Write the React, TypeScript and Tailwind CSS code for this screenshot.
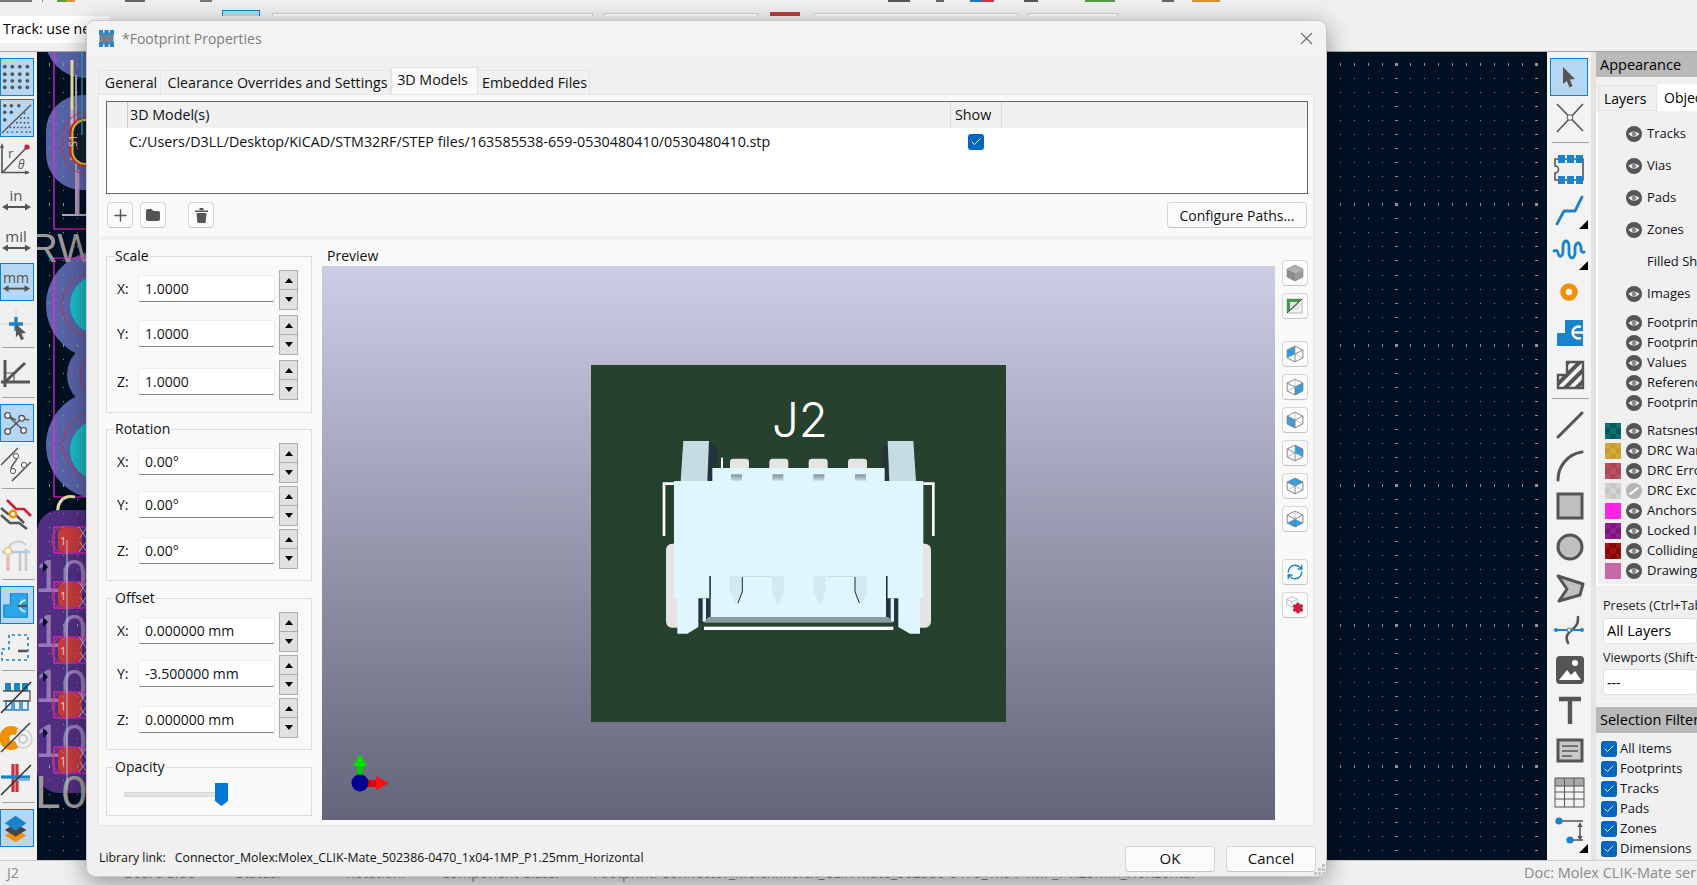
import React from 'react';
import { Check, Plus, RefreshCw, Settings } from 'lucide-react';

const INK = '#555555';
const BLUE = '#1c82c9';

// toolbar icons share one 34x38 box
const Ico: React.FC<{ children: React.ReactNode; w?: number }> = ({ children, w = 34 }) => (
  <svg width={w} height={38} viewBox={`0 0 ${w} 38`} fill="none">{children}</svg>
);

const Tool: React.FC<{ on?: boolean; wide?: boolean; children: React.ReactNode }> = ({ on, wide, children }) => (
  <div className={`h-[38px] shrink-0 ${wide ? 'w-[38px]' : 'w-[34px]'} ${on ? 'bg-[#b5d7f3] border border-[#0f7fd6]' : ''} flex items-center justify-center`}>
    {children}
  </div>
);

const Sep: React.FC = () => <div className="h-px mt-[2px] mb-[3px] mx-[2px] bg-[#a3a3a3] shrink-0" />;

const Corner = () => <polygon points="38,29 38,38 29,38" fill="#000" />;

const UnitIcon: React.FC<{ t: string; y: number; size?: number }> = ({ t, y, size = 15 }) => (
  <Ico>
    <text x="16" y={y} textAnchor="middle" fontSize={size} fill={INK} fontFamily="Open Sans, sans-serif">{t}</text>
    <path d="M5 26H28" stroke={INK} strokeWidth="2" />
    <path d="M2 26l6-3.5v7zM31 26l-6-3.5v7z" fill={INK} />
  </Ico>
);

const LeftToolbar = () => (
  <div className="w-[37px] shrink-0 flex flex-col gap-[3px] pt-[6px] bg-[#f0f0f0]">
    <Tool on>
      <Ico>
        {[4, 12, 20, 28].map(x => [8, 16, 23, 30].map(y => <circle key={`${x}${y}`} cx={x} cy={y} r="2" fill={INK} />))}
      </Ico>
    </Tool>
    <Tool on>
      <Ico>
        {[[4, 6], [11, 6], [19, 6], [4, 13], [11, 13], [4, 21]].map(([x, y]) => <circle key={`${x}${y}`} cx={x} cy={y} r="1.9" fill={INK} />)}
        {[[25, 14], [21, 19], [25, 19], [29, 19], [17, 24], [21, 24], [25, 24], [29, 24], [10, 29], [14, 29], [18, 29], [22, 29], [26, 29], [30, 29], [7, 34], [12, 34], [17, 34], [22, 34], [27, 34], [31, 34]].map(([x, y]) => <circle key={`${x}${y}`} cx={x} cy={y} r="1" fill={INK} />)}
        <path d="M1 35L32 5" stroke={INK} strokeWidth="1.4" />
      </Ico>
    </Tool>
    <Tool>
      <Ico>
        <path d="M2 33V5M1 32.5H29M3 32L27 7" stroke={INK} strokeWidth="1.6" />
        <path d="M2 3l-2 5h4zM30 32.5l-5-2v4z" fill={INK} />
        <circle cx="27" cy="7" r="2.6" fill="#c8203c" />
        <text x="8" y="18" fontSize="13" fill={INK} fontFamily="Open Sans, sans-serif">r</text>
        <text x="18" y="29" fontSize="12" fontStyle="italic" fill={INK} fontFamily="Open Sans, sans-serif">θ</text>
      </Ico>
    </Tool>
    <Tool><UnitIcon t="in" y={20} /></Tool>
    <Tool><UnitIcon t="mil" y={20} /></Tool>
    <Tool on><UnitIcon t="mm" y={20} /></Tool>
    <Tool>
      <Ico>
        <path d="M1 20H33M16 4V36" stroke="#d8d8d8" />
        <path d="M9 20H23M16 13V27" stroke={BLUE} strokeWidth="3.4" />
        <path d="M16 20L26 29 21.5 29.5 24 35 21 36 18.5 30.5 16 33Z" fill={INK} />
      </Ico>
    </Tool>
    <Sep />
    <Tool>
      <Ico>
        <path d="M5 6V33M1 28H30M5 28L25 9" stroke={INK} strokeWidth="3" />
        <path d="M5 19H14V28" stroke={INK} strokeWidth="1.2" />
      </Ico>
    </Tool>
    <Sep />
    <Tool on>
      <Ico>
        <path d="M7 11L24 27M7 28L22 14M22 14L30 16M7 11L16 16" stroke={INK} strokeWidth="1.5" />
        {[[7, 11], [22, 14], [7, 28], [24, 27]].map(([x, y]) => <circle key={x + y} cx={x} cy={y} r="3" fill="#fff" stroke={INK} strokeWidth="1.4" />)}
      </Ico>
    </Tool>
    <Tool>
      <Ico>
        <path d="M1 20L18 3M12 36L31 17" stroke={INK} strokeWidth="1.6" />
        <path d="M15 11C22 14 6 22 13 26" stroke={INK} strokeWidth="1.4" />
        <circle cx="16" cy="11" r="2.6" fill="#fff" stroke={INK} />
        <circle cx="13" cy="26" r="2.6" fill="#fff" stroke={INK} />
        <circle cx="24" cy="20" r="2.6" fill="#fff" stroke={INK} />
      </Ico>
    </Tool>
    <Sep />
    <Tool>
      <Ico>
        <path d="M7 5L16 14H24L31 21" stroke="#c8203c" strokeWidth="2.6" />
        <path d="M1 13L8 19H15L24 28" stroke={INK} strokeWidth="2.6" />
        <path d="M1 20L10 28H19L27 34" stroke={INK} strokeWidth="2.4" />
        <circle cx="13" cy="19" r="3.2" fill="#fff" stroke="#f29100" strokeWidth="2.4" />
      </Ico>
    </Tool>
    <Tool>
      <Ico>
        <path d="M8 20V35" stroke="#f0b8b8" strokeWidth="3.5" />
        <path d="M20 15V35M26 13V35" stroke="#c9c9c9" strokeWidth="2.6" />
        <path d="M8 14C10 4 22 4 26 9" stroke="#d0d0d0" strokeWidth="2.4" />
        <path d="M2 16H30" stroke="#a7cce8" strokeWidth="2.4" />
        <circle cx="8" cy="15" r="3.6" fill="#fff" stroke="#f3c48c" strokeWidth="2" />
      </Ico>
    </Tool>
    <Sep />
    <Tool on>
      <Ico>
        <path d="M3 19H10V7H28V32H3Z" fill="#2aa6ea" stroke={BLUE} strokeWidth="1.2" />
        <path d="M26 14A6 6 0 1 0 26 26" stroke="#d7effb" strokeWidth="2" />
        <path d="M18 20H28" stroke={INK} strokeWidth="2.6" />
      </Ico>
    </Tool>
    <Tool>
      <Ico>
        <path d="M2 22H9V8H28V33H2Z" stroke={BLUE} strokeWidth="1.6" strokeDasharray="3 3" />
        <path d="M18 24H27" stroke={INK} strokeWidth="2.6" />
      </Ico>
    </Tool>
    <Sep />
    <Tool>
      <Ico>
        <path d="M5 6h6v8H5zM14 6h6v8h-6zM22 6h6v8h-6z" fill={BLUE} />
        <path d="M6 24h6v9H6zM14 24h6v9h-6zM22 24h6v9h-6z" stroke={BLUE} strokeWidth="1.5" />
        <path d="M3 14H30V24H3" stroke={INK} strokeWidth="1.3" />
        <path d="M1 36L31 5" stroke="#333" strokeWidth="1.6" />
      </Ico>
    </Tool>
    <Tool>
      <Ico>
        <circle cx="23" cy="21" r="9" stroke="#cfcfcf" strokeWidth="1.5" />
        <circle cx="23" cy="21" r="4" stroke="#bcbcbc" strokeWidth="1.5" />
        <path d="M18 10A12 12 0 1 0 18 30L14 20Z" fill="#f29100" />
        <circle cx="13" cy="20" r="3.6" fill="#f0f0f0" />
        <path d="M1 34L30 5" stroke="#444" strokeWidth="1.6" />
      </Ico>
    </Tool>
    <Tool>
      <Ico>
        <path d="M13 5V33M17 5V33" stroke="#c8323c" strokeWidth="3.2" />
        <path d="M1 18H30" stroke={BLUE} strokeWidth="3.2" />
        <path d="M16 21H30" stroke="#7fb9e2" strokeWidth="2" />
        <path d="M1 36L31 6" stroke="#333" strokeWidth="1.6" />
      </Ico>
    </Tool>
    <Sep />
    <Tool on>
      <Ico>
        <path d="M4 27L15.5 20 27 27 15.5 34Z" fill="#f29100" />
        <path d="M4 21L15.5 14 27 21 15.5 28Z" fill="#444" />
        <path d="M4 14L15.5 6 27 14 15.5 22Z" fill={BLUE} />
      </Ico>
    </Tool>
  </div>
);

const RightToolbar = () => (
  <div className="w-[44px] shrink-0 flex flex-col gap-[3px] pt-[6px] pl-[3px] bg-[#f3f3f3]">
    <Tool on wide>
      <Ico w={36}><path d="M13 9L25 21 19.8 21.6 22.5 28 19.5 29.4 16.8 23 13 26Z" fill={INK} transform="translate(-1 0)" /></Ico>
    </Tool>
    <Tool wide>
      <Ico w={38}>
        <path d="M7 5L33 32M33 5L7 33" stroke={INK} strokeWidth="1.6" />
        <circle cx="20" cy="18.5" r="2.8" fill="#fff" stroke={INK} />
      </Ico>
    </Tool>
    <div className="h-px mt-[2px] mb-[4px] mx-[2px] bg-[#a3a3a3] shrink-0" />
    <Tool wide>
      <Ico w={38}>
        <path d="M5 9H33V30H5V23A3 3 0 0 0 5 16Z" fill="#f0f0f0" stroke={INK} strokeWidth="1.6" />
        <path d="M8 5h7v8H8zM17 5h7v8h-7zM26 5h7v8h-7zM8 26h7v8H8zM17 26h7v8h-7zM26 26h7v8h-7z" fill={BLUE} />
      </Ico>
    </Tool>
    <Tool wide>
      <Ico w={38}>
        <path d="M7 33L14 20H25L32 6" stroke={BLUE} strokeWidth="2.8" strokeLinecap="round" strokeLinejoin="round" />
        <Corner />
      </Ico>
    </Tool>
    <Tool wide>
      <Ico w={38}>
        <path d="M4 19Q7 17 8 21T11 24 13 20V13Q14 9 16 9T19 13V22Q20 26 22 26T25 22V15Q26 11 28 11T31 15V18Q32 21 34 20" stroke={BLUE} strokeWidth="2.8" strokeLinecap="round" />
        <Corner />
      </Ico>
    </Tool>
    <Tool wide>
      <Ico w={38}><circle cx="19" cy="19" r="6" stroke="#f29100" strokeWidth="5.5" /></Ico>
    </Tool>
    <Tool wide>
      <Ico w={38}>
        <path d="M7 19H15V6H33V32H7Z" fill={BLUE} />
        <path d="M31 13A6 6 0 1 0 31 24" stroke="#fff" strokeWidth="2.4" />
        <path d="M24 18.5H33" stroke="#f0f0f0" strokeWidth="2.6" />
      </Ico>
    </Tool>
    <Tool wide>
      <Ico w={38}>
        <defs>
          <pattern id="hatch" width="8" height="8" patternUnits="userSpaceOnUse" patternTransform="rotate(45)">
            <rect width="4" height="8" fill="#555" />
          </pattern>
        </defs>
        <path d="M8 20H17V7H33V33H8Z" fill="url(#hatch)" stroke={INK} strokeWidth="2.4" />
      </Ico>
    </Tool>
    <Sep />
    <Tool wide><Ico w={38}><path d="M8 32L32 8" stroke={INK} strokeWidth="3" strokeLinecap="round" /></Ico></Tool>
    <Tool wide><Ico w={38}><path d="M8 34C8 20 18 8 32 6" stroke={INK} strokeWidth="3" strokeLinecap="round" /></Ico></Tool>
    <Tool wide><Ico w={38}><rect x="8" y="7" width="24" height="24" fill="#c0c0c0" stroke={INK} strokeWidth="3" /></Ico></Tool>
    <Tool wide><Ico w={38}><circle cx="20" cy="19" r="12" fill="#c0c0c0" stroke={INK} strokeWidth="3" /></Ico></Tool>
    <Tool wide><Ico w={38}><path d="M8 7L33 15 30 26 9 32 17 20Z" fill="#c0c0c0" stroke={INK} strokeWidth="3" strokeLinejoin="round" /></Ico></Tool>
    <Tool wide>
      <Ico w={38}>
        <path d="M18 33C14 24 20 22 24 18S28 12 28 7" stroke={INK} strokeWidth="2.6" strokeLinecap="round" />
        <path d="M5 20H33" stroke={BLUE} strokeWidth="2" />
        <circle cx="6" cy="20" r="2" fill={BLUE} /><circle cx="32" cy="20" r="2" fill={BLUE} />
        <circle cx="19" cy="20" r="2" fill="#fff" stroke={BLUE} />
      </Ico>
    </Tool>
    <Tool wide>
      <Ico w={38}>
        <rect x="6" y="5" width="28" height="28" rx="4" fill={INK} />
        <path d="M9 29L17 19 21 24 25 20 31 29Z" fill="#fff" />
        <circle cx="25" cy="12" r="3" fill="#fff" />
      </Ico>
    </Tool>
    <Tool wide><Ico w={38}><path d="M9 7H31M20 7V32" stroke={INK} strokeWidth="4.4" /></Ico></Tool>
    <Tool wide>
      <Ico w={38}>
        <rect x="8" y="7" width="24" height="21" fill="#c8c8c8" stroke={INK} strokeWidth="3" />
        <path d="M12 13H28M12 18H28M12 23H22" stroke={INK} strokeWidth="1.5" />
      </Ico>
    </Tool>
    <Tool wide>
      <Ico w={38}>
        <rect x="5" y="4" width="29" height="8" fill="#a9a9a9" />
        <path d="M5 4H34V33H5ZM5 12H34M5 18H34M5 25H34M14.5 4V33M24 4V33" stroke={INK} strokeWidth="1" />
      </Ico>
    </Tool>
    <Tool wide>
      <Ico w={38}>
        <path d="M9 6H33M22 25H33M30 9V24" stroke={INK} strokeWidth="1.5" />
        <path d="M30 7l-2.5 5h5zM30 26l-2.5-5h5z" fill={INK} />
        <circle cx="9" cy="6" r="3.6" fill={BLUE} /><circle cx="20" cy="25" r="3.6" fill={BLUE} />
        <Corner />
      </Ico>
    </Tool>
  </div>
);

// canvas grid: every 10th column/row has longer ticks
const gridPath = () => {
  const out: string[] = [];
  const pitch = 14.035;
  for (let ix = -96; ix <= 11; ix++) {
    const x = Math.round(1396 + ix * pitch);
    if (x > 87 && x < 1335) continue;
    for (let iy = 0; iy < 57; iy++) {
      const y = Math.round(64 + iy * pitch);
      const mx = ((ix % 10) + 10) % 10 === 0;
      const my = iy % 10 === 0;
      if (mx && my) out.push(`M${x - 1} ${y - 1}h3v3h-3z`);
      else if (mx) out.push(`M${x - 1} ${y}h3v1h-3z`);
      else if (my) out.push(`M${x} ${y - 1}h1v3h-1z`);
      else out.push(`M${x} ${y}h1v1h-1z`);
    }
  }
  return out.join('');
};

const BoardArt = () => (
  <svg className="absolute inset-0" width={1510} height={809} viewBox="37 52 1510 809" fill="none">
    <circle cx="85" cy="38" r="40" fill="#5a63a8" />
    <rect x="46" y="95" width="90" height="95" rx="36" fill="#5a63a8" />
    <circle cx="100" cy="305" r="54" fill="#5a63a8" />
    <circle cx="100" cy="375" r="33" fill="#5a63a8" />
    <circle cx="100" cy="445" r="54" fill="#5a63a8" />
    <circle cx="95" cy="305" r="33" stroke="#b43a48" />
    <circle cx="100" cy="305" r="30" fill="#19bcc8" />
    <circle cx="100" cy="375" r="20" stroke="#b43a48" />
    <circle cx="95" cy="445" r="32" stroke="#b43a48" />
    <circle cx="100" cy="450" r="30" fill="#19bcc8" />
    <path d="M72 60V110" stroke="#efe59c" strokeWidth="3" />
    <path d="M72 110V160" stroke="#e8b6c8" strokeWidth="3" />
    <path d="M76 75V215" stroke="#a9a9a9" strokeWidth="2" />
    <path d="M62 215H87" stroke="#b0b0b0" strokeWidth="2" />
    <path d="M78 170V215" stroke="#b98cc8" strokeWidth="3" />
    <rect x="63" y="112" width="50" height="62" rx="24" stroke="#b43a48" />
    <rect x="69" y="117" width="40" height="50" rx="17" fill="#c62a2a" />
    <rect x="72.5" y="120" width="30" height="44" rx="13" fill="#15202e" stroke="#e3c13a" strokeWidth="2" />
    <path d="M82 52V135" stroke="#35b6d8" strokeWidth="1.2" />
    <text transform="rotate(-90 77 147)" x="77" y="147" fontSize="11" fill="#d8d8d8" fontFamily="Open Sans, sans-serif">S1</text>
    <text x="29" y="262" fontSize="40" fill="#9a9a9a" fontFamily="Liberation Sans, sans-serif">RW</text>
    <path d="M54 52V229H87M87 258H54V497H87" stroke="#ff22dd" strokeWidth="1.2" />
    <path d="M75 497C62 494 54 506 60 517 64 524 72 524 78 520" stroke="#e4dfa5" strokeWidth="3" />
    <rect x="37" y="510" width="80" height="283" rx="22" fill="#512f80" />
    {[592, 647, 702, 757].map(y => <text key={y} x="35" y={y} fontSize="46" letterSpacing="1" fill="#b89bd2" fillOpacity=".7" fontFamily="Liberation Sans, sans-serif">100</text>)}
    <text x="35" y="808" fontSize="46" letterSpacing="1" fill="#9a9a9a" fontFamily="Liberation Sans, sans-serif">L00</text>
    {[540, 595, 650, 705, 760].map(y => (
      <g key={y}>
        <rect x="58" y={y - 12} width="24" height="24" rx="5" fill="#c63a3a" />
        <text x="60" y={y + 5} fontSize="11" fill="#f0d8d8" fontFamily="Open Sans, sans-serif">1</text>
        <rect x="54" y={y - 13} width="40" height="26" stroke="#ff22dd" />
        <path d={`M79 ${y - 13}L87 ${y - 1}M87 ${y - 13}L79 ${y - 1}M79 ${y + 1}L87 ${y + 12}M87 ${y + 1}L79 ${y + 12}`} stroke="#c9a5d8" />
        <circle cx="66" cy={y} r="14" stroke="#c63a58" />
      </g>
    ))}
    {[567, 622, 677, 733].map(y => <path key={y} d={`M43 ${y - 5}l5 5-5 5z`} fill="#001023" />)}
    <path d="M67 540V790" stroke="#9fd0ea" />
    <path d={gridPath()} fill="#8d9198" shapeRendering="crispEdges" />
  </svg>
);

const Eye: React.FC<{ off?: boolean }> = ({ off }) => (
  <svg width={16} height={16} viewBox="0 0 16 16" className="shrink-0">
    <circle cx="8" cy="8" r="8" fill={off ? '#b4b4b4' : INK} />
    {off ? (
      <path d="M3.5 11.5L12.5 4.5" stroke="#fff" strokeWidth="2" />
    ) : (
      <>
        <path d="M2.5 8C5 4.6 11 4.6 13.5 8 11 11.4 5 11.4 2.5 8Z" fill="#e8e8e8" />
        <circle cx="8" cy="8" r="2.2" fill="#8a8a8a" />
      </>
    )}
  </svg>
);

const Swatch: React.FC<{ a?: string; b?: string }> = ({ a, b }) =>
  a ? (
    <svg width={16} height={16} className="shrink-0" shapeRendering="crispEdges">
      {[0, 1, 2].map(i => [0, 1, 2].map(j => (
        <rect key={`${i}${j}`} x={i * 5.33} y={j * 5.33} width="5.4" height="5.4" fill={(i + j) % 2 ? (b ?? a) : a} />
      )))}
    </svg>
  ) : <div className="w-4 h-4 shrink-0" />;

const objRow = (name: string, h: string, sw?: [string, string], eye = true, off = false) => (
  <div key={name} className={`${h} flex items-center pl-[6px]`}>
    <Swatch a={sw?.[0]} b={sw?.[1]} />
    <div className="w-[5px] shrink-0" />
    {eye ? <Eye off={off} /> : <div className="w-4 shrink-0" />}
    <span className="ml-[5px] text-[13px] text-[#101020] whitespace-nowrap">{name}</span>
  </div>
);

const CheckBox: React.FC<{ size?: string }> = ({ size = 'w-4 h-4' }) => (
  <span className={`${size} rounded-[3px] bg-[#0067c0] flex items-center justify-center shrink-0`}>
    <Check size={12} color="#fff" strokeWidth={1.8} />
  </span>
);

const AppearancePanel = () => (
  <div className="flex-1 min-w-0 flex flex-col bg-[#f0f0f0] border-l-[5px] border-[#e4e4e4]">
    <div className="h-[25px] bg-[#b9b9b9] pl-1 flex items-center text-[14.5px] text-black whitespace-nowrap shrink-0">Appearance</div>
    <div className="h-[34px] flex items-end pl-[2px] shrink-0">
      <div className="h-[26px] w-[59px] shrink-0 bg-[#f0f0f0] border border-[#e2e2e2] pl-[5px] text-[14px] flex items-center">Layers</div>
      <div className="h-[27px] flex-1 bg-white pl-[7px] text-[14px] flex items-center rounded-t-[2px] whitespace-nowrap overflow-hidden">Objects</div>
    </div>
    <div className="h-[473px] pt-[7px] pl-[1px] border-l-2 border-white shrink-0 overflow-hidden">
      {objRow('Tracks', 'h-8')}
      {objRow('Vias', 'h-8')}
      {objRow('Pads', 'h-8')}
      {objRow('Zones', 'h-8')}
      {objRow('Filled Shapes', 'h-8', undefined, false)}
      {objRow('Images', 'h-8')}
      <div className="h-[3px]" />
      {objRow('Footprints Front', 'h-5')}
      {objRow('Footprints Back', 'h-5')}
      {objRow('Values', 'h-5')}
      {objRow('References', 'h-5')}
      {objRow('Footprint Text', 'h-5')}
      <div className="h-[8px]" />
      {objRow('Ratsnest', 'h-5', ['#0f6e6a', '#045a58'])}
      {objRow('DRC Warnings', 'h-5', ['#d0a83c', '#c89c2e'])}
      {objRow('DRC Errors', 'h-5', ['#bb5060', '#ad4455'])}
      {objRow('DRC Exclusions', 'h-5', ['#d2d2d2', '#c8c8c8'], true, true)}
      {objRow('Anchors', 'h-5', ['#ff26e2', '#ff26e2'])}
      {objRow('Locked Items', 'h-5', ['#90208c', '#7a1877'])}
      {objRow('Colliding Holes', 'h-5', ['#9e1212', '#850808'])}
      {objRow('Drawing Sheet', 'h-5', ['#c66ba9', '#c66ba9'])}
    </div>
    <div className="h-[2px] bg-[#fafafa] shrink-0" />
    <div className="h-[29px] pl-[7px] pt-[11px] text-[12.5px] leading-[18px] text-[#222] whitespace-nowrap shrink-0">Presets (Ctrl+Tab):</div>
    <div className="ml-[7px] mt-[3px] h-[26px] bg-white border border-[#dfdfdf] rounded-[3px] pl-[3px] flex items-center text-[14.5px] shrink-0 whitespace-nowrap">All Layers</div>
    <div className="pl-[7px] mt-[4px] h-[20px] text-[12.5px] leading-[20px] text-[#222] whitespace-nowrap shrink-0">Viewports (Shift+Tab):</div>
    <div className="ml-[7px] mt-[1px] h-[26px] bg-white border border-[#dfdfdf] rounded-[3px] pl-[3px] flex items-center text-[14px] shrink-0">---</div>
    <div className="h-[7px] bg-[#f0f0f0] border-b border-[#f8f8f8] shrink-0" />
    <div className="mt-[5px] h-[26px] bg-[#b9b9b9] pl-1 flex items-center text-[14.5px] text-black whitespace-nowrap shrink-0">Selection Filter</div>
    <div className="pt-[6px] pl-[5px] flex flex-col">
      {['All items', 'Footprints', 'Tracks', 'Pads', 'Zones', 'Dimensions'].map(t => (
        <div key={t} className="h-5 flex items-center gap-[3px] text-[13px] text-[#101020]">
          <CheckBox />
          {t}
        </div>
      ))}
    </div>
  </div>
);

const Spin = () => (
  <div className="w-[19px] flex flex-col shrink-0">
    <div className="h-5 bg-[#e1e1e1] border border-[#adadad] flex items-center justify-center">
      <svg width={8} height={5}><path d="M4 0L8 5H0Z" fill="#000" /></svg>
    </div>
    <div className="h-5 bg-[#e1e1e1] border border-t-0 border-[#adadad] flex items-center justify-center">
      <svg width={8} height={5}><path d="M4 5L8 0H0Z" fill="#000" /></svg>
    </div>
  </div>
);

const Field: React.FC<{ label: string; value: string; low?: boolean }> = ({ label, value, low }) => (
  <div className={`h-10 flex items-start pl-[10px] ${low ? 'pt-[8px]' : 'pt-[5px]'}`}>
    <span className="w-[21px] h-[27px] leading-[27px] text-[14px] text-[#111]">{label}</span>
    <div className="w-[137px] h-[27px] bg-white border border-[#ececec] border-b-[#868686] rounded-[3px] pl-[6px] flex items-center text-[14px] text-[#111] whitespace-nowrap">{value}</div>
    <div className={`w-1 shrink-0 ${low ? '-mt-[8px]' : '-mt-[5px]'}`} />
    <div className={low ? '-mt-[8px]' : '-mt-[5px]'}><Spin /></div>
  </div>
);

const Group: React.FC<{ title: string; gap: string; cn: string; rows: [string, string][] }> = ({ title, gap, cn, rows }) => (
  <fieldset className={`border border-[#dcdcdc] ${cn}`}>
    <legend className="ml-[7px] px-[1px] h-5 text-[14px] leading-5 text-[#111]">{title}</legend>
    <div className={`pt-1 flex flex-col ${gap}`}>
      {rows.map(([l, v], i) => <Field key={l} label={l} value={v} low={i === 2} />)}
    </div>
  </fieldset>
);

const IconBtn: React.FC<{ children: React.ReactNode; cn?: string }> = ({ children, cn = '' }) => (
  <div className={`w-[26px] h-[26px] bg-[#fbfbfb] border border-[#d6d6d6] border-b-[#c4c4c4] rounded-[4px] flex items-center justify-center shrink-0 ${cn}`}>
    {children}
  </div>
);

const FACES: Record<string, string> = {
  backLeft: '1,4.5 8,1 8,8 1,11.5',
  frontRight: '8,8 15,4.5 15,11.5 8,15',
  frontLeft: '1,4.5 8,8 8,15 1,11.5',
  backRight: '8,1 15,4.5 15,11.5 8,8',
  top: '8,1 15,4.5 8,8 1,4.5',
  bottom: '1,11.5 8,8 15,11.5 8,15',
};

const Cube: React.FC<{ face: string }> = ({ face }) => (
  <svg width={18} height={18} viewBox="0 0 16 16" fill="none">
    <polygon points={FACES[face]} fill="#2ba1e6" />
    <path d="M8 1L15 4.5V11.5L8 15 1 11.5V4.5ZM1 4.5L8 8 15 4.5M8 8V15" stroke="#7a7a7a" strokeWidth=".8" />
    <path d="M8 1V8L1 11.5M8 8L15 11.5" stroke="#9a9a9a" strokeWidth=".5" />
  </svg>
);

const ViewButtons = () => (
  <div className="w-[26px] pt-[14px] flex flex-col gap-[7px] shrink-0">
    <IconBtn>
      <svg width={18} height={18} viewBox="0 0 16 16">
        <path d="M8 1L15 4.5 8 8 1 4.5Z" fill="#b0b0b0" />
        <path d="M1 4.5L8 8V15L1 11.5Z" fill="#8c8c8c" />
        <path d="M15 4.5L8 8V15L15 11.5Z" fill="#9c9c9c" />
        <path d="M8 1L15 4.5V11.5L8 15 1 11.5V4.5Z" fill="none" stroke="#777" strokeWidth=".6" />
      </svg>
    </IconBtn>
    <IconBtn>
      <svg width={18} height={18} viewBox="0 0 18 18" fill="none">
        <rect x="1" y="2" width="15" height="14" fill="#f0f0f0" stroke="#bbb" />
        <path d="M1 2H16L1 16Z" fill="#3f9b4a" />
        <rect x="4" y="5" width="9" height="8" fill="#e0e0e0" />
        <path d="M4 13L13 5" stroke="#666" />
        <path d="M1 16L16 2" stroke="#444" />
      </svg>
    </IconBtn>
    <div className="h-[8px]" />
    {['backLeft', 'frontRight', 'frontLeft', 'backRight', 'top', 'bottom'].map(f => <IconBtn key={f}><Cube face={f} /></IconBtn>)}
    <div className="h-[13px]" />
    <IconBtn><RefreshCw size={18} color="#1c82c9" strokeWidth={1.8} /></IconBtn>
    <IconBtn>
      <span className="relative block w-[18px] h-[18px]">
        <svg width={12} height={12} viewBox="0 0 16 16" fill="none" className="absolute left-0 top-0">
          <path d="M8 1L15 4.5V11.5L8 15 1 11.5V4.5ZM1 4.5L8 8 15 4.5M8 8V15" stroke="#9cb5cc" />
        </svg>
        <Settings size={12} color="#c8203c" fill="#c8203c" strokeWidth={2.4} className="absolute right-0 bottom-0" />
      </span>
    </IconBtn>
  </div>
);

// 3D render of the connector, coordinates taken on a 3x grid
const ConnectorRender = () => (
  <svg width={415} height={357} viewBox="3 12 1245 1071">
    <defs>
      <linearGradient id="win" x1="0" y1="0" x2="0" y2="1">
        <stop offset="0" stopColor="#7f9298" />
        <stop offset="1" stopColor="#c8d8dc" />
      </linearGradient>
    </defs>
    <text x="546" y="228" fontSize="142" fontWeight="300" fill="#fff" fontFamily="Inter, sans-serif">J2</text>
    <polygon points="357,240 380,265 380,320 366,360 352,360" fill="#25333a" />
    <polygon points="893,240 873,265 873,320 885,360 898,360" fill="#25333a" />
    <polygon points="280,240 357,240 352,360 272,360" fill="#c5dde2" />
    <polygon points="893,240 970,240 978,360 898,360" fill="#c5dde2" />
    <path d="M396 290V322" stroke="#fff" strokeWidth="6" />
    {[420, 538, 656, 774].map(x => <rect key={x} x={x} y="293" width="57" height="40" rx="10" fill="#e4e4e4" />)}
    <rect x="367" y="321" width="517" height="40" fill="#e0f6fe" />
    {[423, 547, 670, 795].map(x => <rect key={x} x={x} y="340" width="33" height="19" fill="url(#win)" />)}
    <path d="M222 525V368H252M1030 525V368H1000" stroke="#fff" strokeWidth="8" fill="none" />
    <rect x="228" y="548" width="50" height="252" rx="18" fill="#e4e4e4" />
    <rect x="973" y="548" width="50" height="252" rx="18" fill="#e4e4e4" />
    <rect x="325" y="712" width="600" height="74" fill="#25333a" />
    <rect x="338" y="712" width="10" height="70" fill="#e0f6fe" />
    <rect x="902" y="712" width="10" height="70" fill="#e0f6fe" />
    <polygon points="252,360 1000,360 1000,712 925,712 925,798 960,818 990,818 990,800 990,712 892,712 892,645 360,645 360,712 262,712 262,818 292,818 325,798 325,712 252,712" fill="#e0f6fe" />
    <rect x="362" y="645" width="526" height="125" fill="#e0f6fe" />
    <path d="M360 645V712M890 645V712" stroke="#1c282e" strokeWidth="4" />
    <path d="M458 646H545M705 646H795" stroke="#b9cdd2" strokeWidth="2" />
    {[420, 545, 670, 795].map(x => <polygon key={x} points={`${x},645 ${x + 37},645 ${x + 37},690 ${x + 24},728 ${x + 14},728 ${x},690`} fill="#d2ebf0" />)}
    <path d="M457 648V692L444 726" stroke="#1c282e" strokeWidth="3" fill="none" />
    <path d="M795 648V692L808 726" stroke="#1c282e" strokeWidth="3" fill="none" />
    <polygon points="355,768 895,768 908,785 342,785" fill="#899da0" />
    <rect x="342" y="797" width="568" height="10" fill="#fff" />
  </svg>
);

const Gizmo = () => (
  <svg className="absolute left-[25px] bottom-[22px]" width={46} height={46} viewBox="0 0 46 46">
    <rect x="10" y="10" width="6" height="18" fill="#00c800" />
    <path d="M13 2L20 14H6Z" fill="#00e000" />
    <rect x="16" y="28" width="14" height="7" fill="#d80000" />
    <path d="M42 31L29 24V38Z" fill="#ff1010" />
    <circle cx="13" cy="31" r="8.5" fill="#000090" />
  </svg>
);

const Dialog = () => (
  <div className="absolute left-[86px] top-[20px] w-[1241px] h-[857px] rounded-[9px] bg-[#f0f0f0] border border-[#c8c8c8] shadow-[0_6px_26px_rgba(0,0,0,0.4)] flex flex-col overflow-hidden">
    <div className="h-[35px] bg-[#f3f3f3] flex items-center pl-[11px] shrink-0">
      <svg width={17} height={17} viewBox="0 0 17 17">
        <rect x="1.5" y="2.5" width="14" height="12" fill="#74818c" />
        <path d="M1 0h4v5H1zM6.5 0h4v5h-4zM12 0h4v5h-4zM1 12h4v5H1zM6.5 12h4v5h-4zM12 12h4v5h-4z" fill="#2388cc" />
      </svg>
      <span className="ml-[7px] text-[14px] text-[#7d7d7d]">*Footprint Properties</span>
      <svg width={13} height={13} viewBox="0 0 13 13" className="ml-auto mr-[13px]"><path d="M1 1L12 12M12 1L1 12" stroke="#6f6f6f" strokeWidth="1.1" /></svg>
    </div>
    <div className="h-[38px] flex items-end pl-[12px] shrink-0 text-[14.25px] text-[#111]">
      <div className="w-[62px] h-[24px] pl-[2px] border border-b-0 border-[#e4e4e4] bg-[#f0f0f0] flex items-center justify-center whitespace-nowrap">General</div>
      <div className="w-[230px] h-[24px] pl-[4px] border border-b-0 border-l-0 border-[#e4e4e4] bg-[#f0f0f0] flex items-center justify-center whitespace-nowrap">Clearance Overrides and Settings</div>
      <div className="w-[87px] h-[27px] pr-[4px] border border-b-0 border-[#e4e4e4] bg-[#f9f9f9] flex items-center justify-center whitespace-nowrap pb-[2px]">3D Models</div>
      <div className="w-[112px] h-[24px] pl-[2px] border border-b-0 border-l-0 border-[#e4e4e4] bg-[#f0f0f0] flex items-center justify-center whitespace-nowrap">Embedded Files</div>
    </div>
    <div className="ml-[11px] mr-[12px] h-[732px] shrink-0 bg-[#f9f9f9] border border-[#e6e6e6] pl-[7px] pr-[5px] pt-[6px] flex flex-col">
      <div className="h-[93px] bg-white border border-[#666] flex flex-col shrink-0 text-[14.3px] text-[#111]">
        <div className="h-[26px] bg-[#f0f0f0] flex shrink-0">
          <div className="w-[21px] border-r border-[#cfcfcf]" />
          <div className="w-[823px] pl-[2px] leading-[26px] border-r border-[#dcdcdc]">3D Model(s)</div>
          <div className="w-[51px] pl-[4px] leading-[26px] border-r border-[#dcdcdc]">Show</div>
        </div>
        <div className="h-[28px] flex items-center">
          <div className="w-[22px] shrink-0" />
          <div className="w-[823px] shrink-0 whitespace-nowrap">C:/Users/D3LL/Desktop/KiCAD/STM32RF/STEP files/163585538-659-0530480410/0530480410.stp</div>
          <div className="ml-[16px]"><CheckBox /></div>
        </div>
      </div>
      <div className="mt-[8px] h-[26px] flex items-center shrink-0 pl-[1px]">
        <IconBtn><Plus size={19} color={INK} strokeWidth={1.8} /></IconBtn>
        <IconBtn cn="ml-[7px]">
          <svg width={16} height={14} viewBox="0 0 16 14"><path d="M1 3a2 2 0 0 1 2-2h3.5l2 2H13a2 2 0 0 1 2 2v6a2 2 0 0 1-2 2H3a2 2 0 0 1-2-2Z" fill={INK} /></svg>
        </IconBtn>
        <IconBtn cn="ml-[22px]">
          <svg width={13} height={15} viewBox="0 0 13 15"><path d="M0 2.5h13V4H0zM4.5 0h4v2h-4zM1.5 5h10l-.8 9a1 1 0 0 1-1 1H3.3a1 1 0 0 1-1-1Z" fill={INK} /></svg>
        </IconBtn>
        <div className="ml-auto mr-[1px] w-[140px] h-[26px] bg-[#fbfbfb] border border-[#d6d6d6] border-b-[#c4c4c4] rounded-[4px] flex items-center justify-center text-[14px] text-[#111] whitespace-nowrap">Configure Paths...</div>
      </div>
      <div className="mt-[8px] h-[4px] -mx-[4px] bg-[#f0f0f0] shrink-0" />
      <div className="flex-1 min-h-0 flex mt-[6px]">
        <div className="w-[206px] shrink-0 flex flex-col">
          <Group title="Scale" gap="gap-[5px]" cn="h-[167px]" rows={[['X:', '1.0000'], ['Y:', '1.0000'], ['Z:', '1.0000']]} />
          <Group title="Rotation" gap="gap-[3px]" cn="mt-[6px] h-[162px]" rows={[['X:', '0.00°'], ['Y:', '0.00°'], ['Z:', '0.00°']]} />
          <Group title="Offset" gap="gap-[3px]" cn="mt-[7px] h-[162px]" rows={[['X:', '0.000000 mm'], ['Y:', '-3.500000 mm'], ['Z:', '0.000000 mm']]} />
          <fieldset className="mt-[7px] h-[59px] border border-[#dcdcdc]">
            <legend className="ml-[7px] px-[1px] h-5 text-[14px] leading-5 text-[#111]">Opacity</legend>
            <div className="relative ml-[17px] mt-[6px] w-[104px] h-[23px] flex items-center">
              <div className="w-full h-[5px] bg-[#e3e3e3] border border-[#d8d8d8]" />
              <svg className="absolute right-0 top-0" width={13} height={23}><path d="M0 0H13V18L6.5 23 0 18Z" fill="#0078d4" /></svg>
            </div>
          </fieldset>
        </div>
        <div className="ml-[10px] flex-1 min-w-0 flex flex-col">
          <div className="h-[20px] pl-[5px] text-[14px] leading-5 text-[#111] shrink-0">Preview</div>
          <div className="relative w-[953px] h-[554px] bg-gradient-to-b from-[#cdcde5] to-[#64647a] flex items-center justify-center shrink-0">
            <div className="w-[415px] h-[357px] bg-[#26422f]"><ConnectorRender /></div>
            <Gizmo />
          </div>
        </div>
        <ViewButtons />
      </div>
    </div>
    <div className="flex-1 min-h-0 flex items-center pl-[12px] pr-[10px] pt-[15px]">
      <span className="text-[12.3px] text-[#111] whitespace-nowrap">Library link:</span>
      <span className="ml-[9px] text-[12.3px] text-[#111] whitespace-nowrap">Connector_Molex:Molex_CLIK-Mate_502386-0470_1x04-1MP_P1.25mm_Horizontal</span>
      <div className="ml-auto w-[90px] h-[26px] bg-[#fbfbfb] border border-[#d6d6d6] border-b-[#c4c4c4] rounded-[4px] flex items-center justify-center text-[15px] text-[#111]">OK</div>
      <div className="ml-[11px] w-[90px] h-[26px] bg-[#fbfbfb] border border-[#d6d6d6] border-b-[#c4c4c4] rounded-[4px] flex items-center justify-center text-[15px] text-[#111]">Cancel</div>
    </div>
    <svg className="absolute right-[1px] bottom-[1px]" width={11} height={11}>
      {[[8, 0], [8, 4], [4, 4], [8, 8], [4, 8], [0, 8]].map(([x, y]) => <rect key={`${x}${y}`} x={x} y={y} width="3" height="3" fill="#c4c4c4" />)}
    </svg>
  </div>
);

// bottoms of the main toolbar's icons, cut off by the top of the window
const TOP_BITS: [number, number, string][] = [
  [0, 32, '#777'], [42, 1, '#999'], [57, 9, '#5a9a4a'], [66, 9, '#d8923a'],
  [125, 20, '#666'], [200, 12, '#777'], [888, 22, '#555'], [936, 8, '#666'],
  [970, 12, '#2c6fc0'], [982, 12, '#c03a3a'], [1024, 14, '#555'], [1085, 30, '#5a9a4a'],
  [1162, 12, '#666'], [1192, 28, '#d8923a'],
];

const App: React.FC = () => (
  <div className="relative w-[1697px] h-[885px] overflow-hidden bg-[#f0f0f0] font-['Open_Sans',sans-serif] text-black">
    <svg width={1697} height={3} className="block">
      {TOP_BITS.map(([x, w, c]) => <rect key={x} x={x} y={0} width={w} height={2} fill={c} />)}
    </svg>
    <div className="h-[13px] flex items-end">
      <div className="ml-[222px] w-[38px] h-[6px] bg-[#b5d7f3] border border-b-0 border-[#0f7fd6]" />
      <div className="ml-[12px] w-[321px] h-[3px] border-t border-x border-[#d2d2d2] bg-white" />
      <div className="ml-[11px] w-[154px] h-[3px] border-t border-x border-[#d2d2d2] bg-white" />
      <div className="ml-[12px] w-[30px] h-[4px] bg-[#c03a3a]" />
      <div className="ml-[14px] w-[204px] h-[3px] border-t border-x border-[#d2d2d2] bg-white" />
      <div className="ml-[10px] w-[90px] h-[3px] border-t border-x border-[#d2d2d2] bg-white" />
    </div>
    <div className="h-[35px] flex items-start">
      <div className="w-[110px] h-[27px] bg-white pl-[3px] text-[14.25px] leading-[26px] whitespace-nowrap overflow-hidden">Track: use netclass widths</div>
    </div>
    <div className="h-[809px] flex border-t border-[#a8a8a8]">
      <LeftToolbar />
      <div className="relative w-[1510px] shrink-0 bg-[#001023] overflow-hidden"><BoardArt /></div>
      <RightToolbar />
      <AppearancePanel />
    </div>
    <div className="h-[24px] flex items-center border-t border-[#cfcfcf] text-[14px] text-[#8a8a8a] whitespace-nowrap">
      <span className="w-[124px] pl-[7px] shrink-0">J2</span>
      <span className="w-[112px] shrink-0">Board Side</span>
      <span className="w-[110px] shrink-0">Status:</span>
      <span className="w-[95px] shrink-0">Rotation:</span>
      <span className="w-[152px] shrink-0">Component Class:</span>
      <span className="w-[931px] shrink-0">Footprint: Connector_Molex:Molex_CLIK-Mate_502386-0470_1x04-1MP_P1.25mm_Horizontal</span>
      <span className="text-[14.5px]">Doc: Molex CLIK-Mate series connector</span>
    </div>
    <Dialog />
  </div>
);

export default App;
